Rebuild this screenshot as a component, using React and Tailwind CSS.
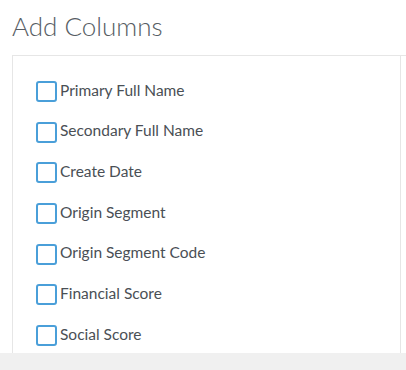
import React from 'react';

const columns = [
  'Primary Full Name',
  'Secondary Full Name',
  'Create Date',
  'Origin Segment',
  'Origin Segment Code',
  'Financial Score',
  'Social Score',
];

export default function App() {
  return (
    <div className="w-[406px] h-[370px] bg-white overflow-hidden flex flex-col" style={{ fontFamily: 'Lato, "Open Sans", sans-serif' }}>
      <h1 className="h-[55px] pl-[12px] pt-[9px] text-[26px] font-light leading-[34px] text-[#575d64]">Add Columns</h1>
      <div className="flex h-[298px]">
        <div className="ml-[12px] w-[389px] border-l border-t border-r border-[#e6e6e6] pl-[23px] pt-[25px] flex flex-col gap-[19.7px]">
          {columns.map((name) => (
            <label key={name} className="flex items-center h-[21px]">
              <span className="w-[21px] h-[21px] rounded-[3px] border-2 border-[#4a9fd9] bg-white shrink-0" />
              <span className="ml-[3px] text-[15.5px] leading-[21px] text-[#4a4f55] -mt-[3px]">{name}</span>
            </label>
          ))}
        </div>
        <div className="flex-1 border-t border-[#e6e6e6]" />
      </div>
      <div className="flex-1 bg-[#f0f0f0]" />
    </div>
  );
}
